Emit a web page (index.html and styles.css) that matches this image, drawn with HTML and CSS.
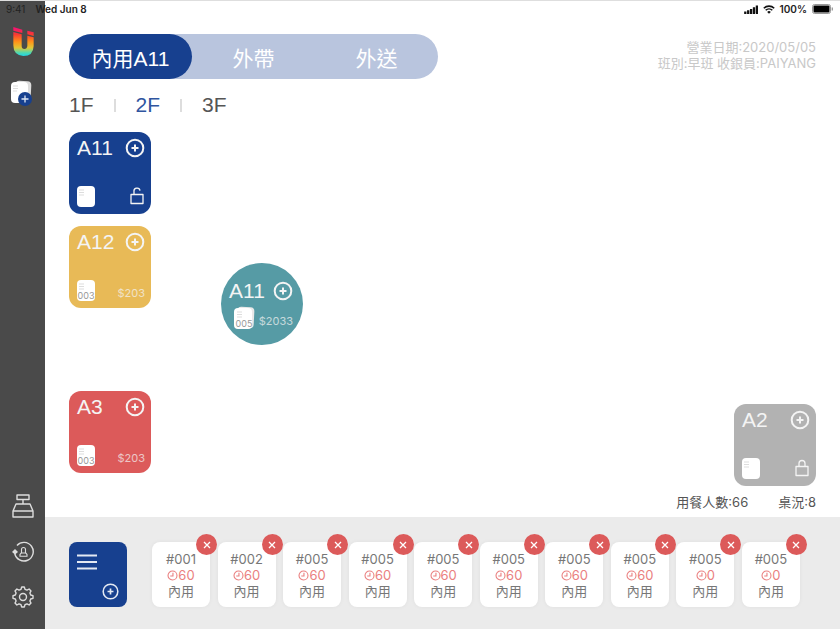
FILE: index.html
```html
<!DOCTYPE html>
<html lang="zh-Hant">
<head>
<meta charset="utf-8">
<meta name="viewport" content="width=device-width, initial-scale=1">
<title>POS</title>
<link rel="stylesheet" href="styles.css">
</head>
<body>
<svg class="defs" aria-hidden="true">
  <defs>
    <linearGradient id="rainbow" gradientUnits="userSpaceOnUse" x1="0" y1="8" x2="0" y2="88">
      <stop offset="0" stop-color="#f5146e"/><stop offset=".22" stop-color="#fb3b30"/><stop offset=".5" stop-color="#ff9418"/><stop offset=".72" stop-color="#e0c636"/><stop offset=".9" stop-color="#4fd8b0"/><stop offset="1" stop-color="#26d5dc"/>
    </linearGradient>
  </defs>
  <symbol id="plus" viewBox="0 0 20 20"><circle cx="10" cy="10" r="8.3" fill="none" stroke="currentColor" stroke-width="2"/><path d="M10 6.5v7M6.5 10h7" stroke="currentColor" stroke-width="2" fill="none"/></symbol>
  <symbol id="plus-thin" viewBox="0 0 20 20"><circle cx="10" cy="10" r="8.6" fill="none" stroke="currentColor" stroke-width="1.8"/><path d="M10 6.5v7M6.5 10h7" stroke="currentColor" stroke-width="2" fill="none"/></symbol>
  <symbol id="sheet" viewBox="0 0 22 24"><rect x="2" y="2" width="18" height="21" rx="4" fill="#fff"/><path d="M4 6h5M4 8.500h5M4 11h5" stroke="#ddd" stroke-width="1"/></symbol>
  <symbol id="sheets" viewBox="0 0 22 24"><rect x="4" y="1" width="17" height="21" rx="4" fill="#e9e9e9" transform="rotate(3 13 12)"/><rect x="1" y="2" width="18" height="21" rx="4" fill="#fff"/><path d="M4 6h5M4 8.500h5M4 11h5" stroke="#ddd" stroke-width="1"/></symbol>
  <symbol id="unlock" viewBox="0 0 14 18"><path d="M1 7.500h12v9H1zM4 7.500V4.500a3 3 0 0 1 6-.8" fill="none" stroke="currentColor" stroke-width="1.300" stroke-linejoin="round"/></symbol>
  <symbol id="lock" viewBox="0 0 14 18"><path d="M1 7.500h12v9H1zM4 7.500V4.500a3 3 0 0 1 6 0v3" fill="none" stroke="currentColor" stroke-width="1.300" stroke-linejoin="round"/></symbol>
  <symbol id="clock" viewBox="0 0 12 12"><circle cx="6" cy="6" r="4.900" fill="none" stroke="currentColor" stroke-width="1.200"/><path d="M6.500 3v3.500H3.500" fill="none" stroke="currentColor" stroke-width="1.200"/></symbol>
  <symbol id="cross" viewBox="0 0 10 10"><path d="M2 2l6 6M8 2L2 8" stroke="currentColor" stroke-width="1.300" fill="none"/></symbol>
</svg>

<header class="status">
  <div><time class="clock">9:41</time><span>Wed Jun 8</span></div>
  <div class="status-right">
    <svg width="14" height="9" viewBox="0 0 14 9"><path d="M1.300 9V6.500M4.200 9V5.300M7.100 9V4M10 9V2.300M12.900 9V.5" stroke="#111" stroke-width="2.300"/></svg>
    <svg width="12" height="9" viewBox="0 0 12 9"><path d="M.8 3.300a7.400 7.400 0 0 1 10.400 0M2.700 5.300a4.700 4.700 0 0 1 6.600 0" fill="none" stroke="#111" stroke-width="1.600"/><path d="M6 8.800L4.200 7a2.500 2.500 0 0 1 3.600 0z" fill="#111"/></svg>
    <span>100%</span>
    <svg width="22" height="10" viewBox="0 0 22 10"><rect x=".5" y=".5" width="18" height="9" rx="2" fill="none" stroke="#999"/><rect x="1.500" y="1.500" width="16" height="7" rx="1" fill="#000"/><path d="M20.300 3.500v3" stroke="#999" stroke-width="1.300"/></svg>
  </div>
</header>

<div class="app">
  <nav class="sidebar">
    <a href="#" class="logo" aria-label="Home"><svg width="22" height="30" viewBox="0 0 66 90"><g fill="url(#rainbow)"><path d="M4 3l27 8v10L4 14z"/><path d="M46 14l19 5v11l-19-5z"/><path d="M4 18l25 7v35q0 9 8 9t9-9V29l19 5v26q-1 30-31 30Q4 88 4 58z"/></g></svg></a>
    <a href="#" class="new-order" aria-label="New order"><svg width="23" height="27" viewBox="0 0 23 27"><rect x="5" y="1" width="16" height="20" rx="4" fill="#ddd" transform="rotate(3 13 11)"/><rect x="1" y="2" width="17" height="21" rx="4" fill="#fff"/><path d="M3 6h5M3 8.500h5M3 11h4" stroke="#ddd"/><circle cx="15" cy="19" r="7" fill="#17408f"/><path d="M15 15.500v7M11.500 19h7" stroke="#dfe6f3" stroke-width="1.300"/></svg></a>
    <div class="tools">
      <a href="#" aria-label="Cash register"><svg width="22" height="24" viewBox="0 0 22 24"><path d="M5 1h12v4.500H5zM11 5.500V10M4 10h14l3 7H1zM1 17h20v6H1z" fill="none" stroke="currentColor" stroke-width="1.400" stroke-linejoin="round"/></svg></a>
      <a href="#" aria-label="Shift change"><svg width="22" height="22" viewBox="0 0 22 22"><path d="M5 4.500A9.300 9.300 0 1 1 2.800 12.500" fill="none" stroke="currentColor" stroke-width="1.400"/><path d="M0 11l3-3 3 3-3 2.500z" fill="currentColor"/><path d="M8 15.300V13.500l1.500-1.800V8.500a2 2 0 0 1 4 0v3.200l1.500 1.800v1.800zM9.500 12h4" fill="none" stroke="currentColor" stroke-width="1.100"/></svg></a>
      <a href="#" aria-label="Settings"><svg width="22" height="22" viewBox="0 0 22 22"><path d="M9 3.300L9.700 1h2.600l.7 2.300 2 .8 2.100-1.100 1.900 1.900-1.100 2.100.8 2 2.300.7v2.600l-2.300.7-.8 2 1.100 2.100-1.900 1.900-2.100-1.100-2 .8-.7 2.300H9.700L9 18.700l-2-.8L4.900 19 3 17.100 4.100 15l-.8-2L1 12.300V9.700L3.300 9l.8-2L3 4.900 4.900 3 7 4.100z" fill="none" stroke="currentColor" stroke-width="1.400" stroke-linejoin="round"/><circle cx="11" cy="11" r="3.500" fill="none" stroke="currentColor" stroke-width="1.400"/></svg></a>
    </div>
  </nav>

  <main class="main">
    <div class="top">
      <div class="modes">
        <button class="mode active">內用A11</button><button class="mode">外帶</button><button class="mode">外送</button>
      </div>
      <div class="info"><div>營業日期:2020/05/05</div><div>班別:早班 收銀員:PAIYANG</div></div>
    </div>
    <div class="floors">
      <button>1F</button><i></i><button class="current">2F</button><i></i><button>3F</button>
    </div>

    <section class="plan">
      <article class="table blue t-a11"><div class="row"><h2>A11</h2><svg class="add"><use href="#plus"/></svg></div><div class="row"><span class="bill"><svg><use href="#sheet"/></svg></span><svg class="lock"><use href="#unlock"/></svg></div></article>
      <article class="table yellow t-a12"><div class="row"><h2>A12</h2><svg class="add"><use href="#plus"/></svg></div><div class="row"><span class="bill"><svg><use href="#sheet"/></svg><b>003</b></span><span class="price">$203</span></div></article>
      <article class="table red t-a3"><div class="row"><h2>A3</h2><svg class="add"><use href="#plus"/></svg></div><div class="row"><span class="bill"><svg><use href="#sheet"/></svg><b>003</b></span><span class="price">$203</span></div></article>
      <article class="table round t-round"><div class="row"><h2>A11</h2><svg class="add"><use href="#plus"/></svg></div><div class="row"><span class="bill"><svg><use href="#sheets"/></svg><b>005</b></span><span class="price">$2033</span></div></article>
      <article class="table gray t-a2"><div class="row"><h2>A2</h2><svg class="add"><use href="#plus"/></svg></div><div class="row"><span class="bill"><svg><use href="#sheet"/></svg></span><svg class="lock"><use href="#lock"/></svg></div></article>
    </section>

    <div class="stats"><span>用餐人數:66</span><span>桌況:8</span></div>

    <footer class="orders">
      <button class="menu" aria-label="Add order"><svg class="bars" viewBox="0 0 20 16"><path d="M0 1.500h20M0 8h20M0 14.500h20" stroke="currentColor" stroke-width="2"/></svg><svg class="menu-add"><use href="#plus-thin"/></svg></button>
      <ul class="tickets">
        <li><span>#001</span><span class="wait"><svg><use href="#clock"/></svg>60</span><span>內用</span><button aria-label="Remove"><svg><use href="#cross"/></svg></button></li>
        <li><span>#002</span><span class="wait"><svg><use href="#clock"/></svg>60</span><span>內用</span><button aria-label="Remove"><svg><use href="#cross"/></svg></button></li>
        <li><span>#005</span><span class="wait"><svg><use href="#clock"/></svg>60</span><span>內用</span><button aria-label="Remove"><svg><use href="#cross"/></svg></button></li>
        <li><span>#005</span><span class="wait"><svg><use href="#clock"/></svg>60</span><span>內用</span><button aria-label="Remove"><svg><use href="#cross"/></svg></button></li>
        <li><span>#005</span><span class="wait"><svg><use href="#clock"/></svg>60</span><span>內用</span><button aria-label="Remove"><svg><use href="#cross"/></svg></button></li>
        <li><span>#005</span><span class="wait"><svg><use href="#clock"/></svg>60</span><span>內用</span><button aria-label="Remove"><svg><use href="#cross"/></svg></button></li>
        <li><span>#005</span><span class="wait"><svg><use href="#clock"/></svg>60</span><span>內用</span><button aria-label="Remove"><svg><use href="#cross"/></svg></button></li>
        <li><span>#005</span><span class="wait"><svg><use href="#clock"/></svg>60</span><span>內用</span><button aria-label="Remove"><svg><use href="#cross"/></svg></button></li>
        <li><span>#005</span><span class="wait"><svg><use href="#clock"/></svg>0</span><span>內用</span><button aria-label="Remove"><svg><use href="#cross"/></svg></button></li>
        <li><span>#005</span><span class="wait"><svg><use href="#clock"/></svg>0</span><span>內用</span><button aria-label="Remove"><svg><use href="#cross"/></svg></button></li>
      </ul>
    </footer>
  </main>
</div>
</body>
</html>
```

FILE: styles.css
```css
* { box-sizing: border-box; }

body {
  margin: 0;
  font-family: Inter, "Noto Sans CJK TC", sans-serif;
  background: #fff;
  color: #555;
}

button {
  font: inherit;
  color: inherit;
  border: 0;
  padding: 0;
  background: none;
  cursor: pointer;
}

svg { display: block; }
.defs { position: absolute; width: 0; height: 0; }

.status {
  position: absolute;
  top: 0;
  left: 0;
  right: 0;
  display: flex;
  justify-content: space-between;
  padding: 1px 6px 0;
  border-top: 1px solid #dedede;
  font-size: 10px;
  font-weight: 600;
  line-height: 14px;
  color: #222;
}
.clock { margin-right: 10px; font-weight: 400; }
.status-right { display: flex; align-items: center; gap: 5px; }

.app { display: flex; min-height: 100vh; }

.sidebar {
  flex: none;
  width: 45px;
  display: flex;
  flex-direction: column;
  align-items: center;
  padding: 26px 0 21px;
  background: #4a4a4a;
  color: #ddd;
}
.new-order { margin-top: 24px; margin-right: 3px; }
.tools {
  margin-top: auto;
  display: flex;
  flex-direction: column;
  gap: 23px;
}
.tools a { color: inherit; }

.main { flex: 1; min-width: 0; display: flex; flex-direction: column; }

.top {
  display: flex;
  justify-content: space-between;
  padding: 34px 24px 0;
}
.modes {
  display: flex;
  height: 45px;
  border-radius: 23px;
  background: #b9c5de;
  color: #fff;
}
.modes, .floors, .table h2 {
  font-family: "Liberation Sans", "Noto Sans CJK TC", sans-serif;
  font-size: 21px;
}
.mode { width: 123px; border-radius: 23px; }
.mode.active { background: #17408f; }
.info {
  padding-top: 5px;
  text-align: right;
  font-size: 13px;
  line-height: 16px;
  color: #c8c8c8;
}

.floors {
  display: flex;
  align-items: center;
  gap: 20px;
  padding: 14px 24px 0;
  line-height: 24px;
}
.floors i { width: 2px; height: 13px; background: #ddd; }
.floors .current { color: #2f55a0; }

.plan { position: relative; flex: 1; min-height: 370px; }
.table {
  position: absolute;
  width: 82px;
  height: 82px;
  padding: 5px 6px 6px 8px;
  border-radius: 12px;
  display: flex;
  flex-direction: column;
  justify-content: space-between;
  color: #f4f4f4;
}
.blue { background: #17408f; }
.yellow { background: #e8ba57; }
.red { background: #dc5a5a; }
.gray { background: #b2b2b2; }
.round {
  background: #569ba5;
  border-radius: 50%;
  padding: 17px 10px 15px 8px;
}
.t-a11 { left: 24px; top: 15px; }
.t-a12 { left: 24px; top: 109px; }
.t-a3 { left: 24px; top: 274px; }
.t-round { left: 176px; top: 146px; }
.t-a2 { right: 24px; top: 287px; }

.row { display: flex; justify-content: space-between; align-items: center; }
.table h2 { margin: 0; line-height: 22px; font-weight: 400; }
.add { flex: none; width: 20px; height: 20px; }
.lock { width: 16px; height: 18px; }
.bill { position: relative; margin-left: -2px; }
.bill svg { width: 22px; height: 24px; }
.bill b {
  position: absolute;
  left: 0;
  right: 0;
  bottom: 1px;
  text-align: center;
  font-size: 9px;
  line-height: 10px;
  font-weight: 400;
  color: #999;
}
.round .bill { margin-left: 4px; }
.price { padding-top: 5px; font-size: 11px; line-height: 14px; opacity: .7; }

.stats {
  display: flex;
  justify-content: flex-end;
  gap: 30px;
  padding: 0 24px 6px;
  font-size: 13px;
  line-height: 18px;
}

.orders {
  display: flex;
  gap: 25px;
  padding: 25px 40px 22px 24px;
  background: #ebebeb;
}
.menu {
  flex: none;
  width: 58px;
  height: 65px;
  padding: 12px 8px 7px;
  border-radius: 8px;
  background: #17408f;
  color: #e4e9f3;
  display: flex;
  flex-direction: column;
  justify-content: space-between;
}
.bars { width: 20px; height: 16px; }
.menu-add { width: 17px; height: 17px; align-self: flex-end; }

.tickets {
  flex: 1;
  display: flex;
  justify-content: space-between;
  margin: 0;
  padding: 0;
  list-style: none;
}
.tickets li {
  position: relative;
  width: 58px;
  height: 65px;
  padding-top: 9px;
  border-radius: 8px;
  background: #fff;
  box-shadow: 0 0 4px rgba(0, 0, 0, .05);
  display: flex;
  flex-direction: column;
  align-items: center;
  font-size: 13px;
  line-height: 16px;
  color: #777;
}
.tickets .wait { display: flex; align-items: center; color: #ea8080; }
.wait svg { width: 11px; height: 11px; }
.tickets button {
  position: absolute;
  top: -8px;
  right: -7px;
  width: 21px;
  height: 21px;
  border-radius: 50%;
  background: #dc5a5a;
  color: #fff;
  display: grid;
  place-items: center;
}
.tickets button svg { width: 10px; height: 10px; }
```
